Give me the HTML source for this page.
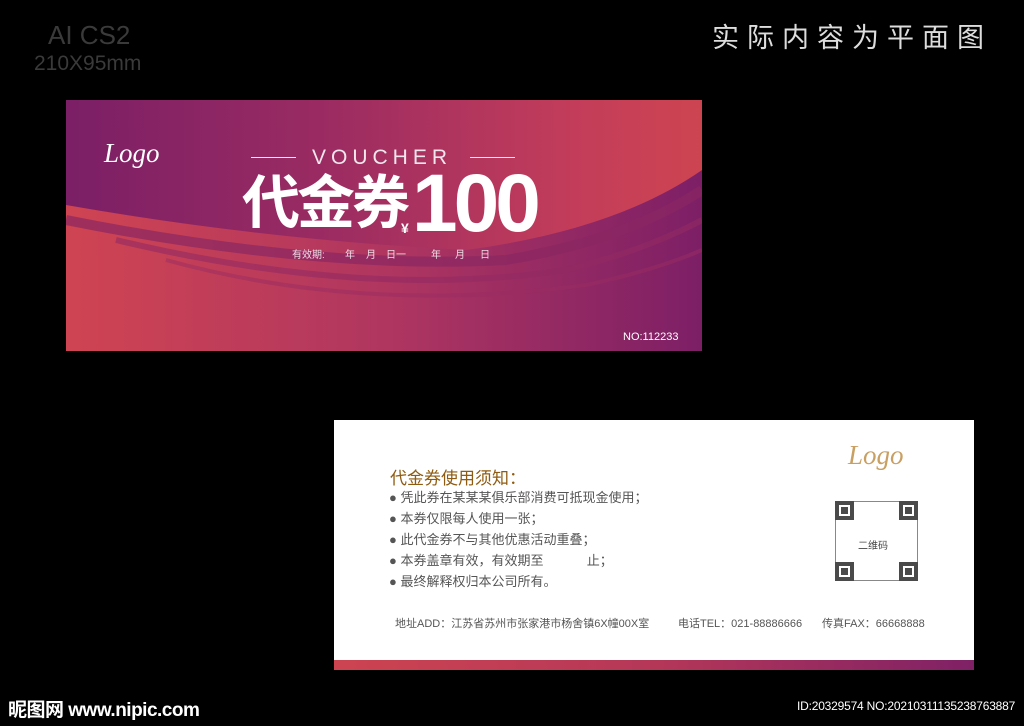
<!DOCTYPE html>
<html><head><meta charset="utf-8"><style>
body{margin:0;width:1024px;height:726px;background:#000;position:relative;overflow:hidden;font-family:"Liberation Sans","Noto Sans CJK SC",sans-serif}
.a{position:absolute;white-space:nowrap}
.d{position:absolute;top:146px;color:#eedde6;font-size:10px}
</style></head><body>
<div class="a" style="left:48px;top:20px;color:#3a3a3a;font-size:26px;line-height:30px">AI CS2</div>
<div class="a" style="left:34px;top:52px;color:#3a3a3a;font-size:21px;line-height:24px">210X95mm</div>
<div class="a" style="left:712px;top:22px;color:#ddd;font-size:27px;letter-spacing:8px;line-height:32px">实际内容为平面图</div>

<div class="a" style="left:66px;top:100px;width:636px;height:251px;overflow:hidden;background:linear-gradient(90deg,#7b1f66 0%,#9a2b62 40%,#c33d5a 80%,#cd4451 100%)">
<svg width="636" height="251" style="position:absolute;left:0;top:0">
<defs><linearGradient id="g" x1="0" x2="1"><stop offset="0" stop-color="#cf4452"/><stop offset=".5" stop-color="#b03660"/><stop offset="1" stop-color="#7d1f66"/></linearGradient></defs>
<path d="M0 105 Q200 140 400 150 Q550 130 636 70 L636 251 L0 251Z" fill="url(#g)"/>
<path d="M0 120 Q250 170 440 160 Q560 140 636 90" fill="none" stroke="#8a2663" stroke-width="10" opacity=".7"/>
<path d="M50 140 Q300 200 500 170 Q580 150 636 120" fill="none" stroke="#922a63" stroke-width="6" opacity=".6"/>
<path d="M100 160 Q300 215 520 185 Q590 170 636 150" fill="none" stroke="#9a2c62" stroke-width="4" opacity=".5"/>
</svg>
<div class="a" style="left:38px;top:38px;color:#fff;font-family:'Liberation Serif',serif;font-style:italic;font-size:27px">Logo</div>
<div class="a" style="left:185px;top:57px;width:45px;height:1px;background:#eee"></div>
<div class="a" style="left:404px;top:57px;width:45px;height:1px;background:#eee"></div>
<div class="a" style="left:246px;top:46px;color:#f0e6ee;font-size:21px;letter-spacing:5px">VOUCHER</div>
<div class="a" style="left:176px;top:68px;color:#fff;font-size:58px;font-weight:bold;line-height:72px;letter-spacing:-3px">代金券</div>
<div class="a" style="left:335px;top:120px;color:#fff;font-size:14px;font-weight:bold">¥</div>
<div class="a" style="left:346px;top:64px;color:#fff;font-size:82px;font-weight:bold;line-height:80px;letter-spacing:-4px">100</div>
<div class="d" style="left:226px">有效期:</div>
<div class="d" style="left:279px">年</div>
<div class="d" style="left:300px">月</div>
<div class="d" style="left:320px">日一</div>
<div class="d" style="left:365px">年</div>
<div class="d" style="left:389px">月</div>
<div class="d" style="left:414px">日</div>
<div class="a" style="left:557px;top:231px;color:#fff;font-size:11px">NO:112233</div>
</div>

<div class="a" style="left:334px;top:420px;width:640px;height:250px;background:#fff">
<div class="a" style="left:0;bottom:0;width:640px;height:10px;background:linear-gradient(90deg,#cd4451,#b53758 50%,#7f2166)"></div>
<div class="a" style="left:514px;top:20px;color:#c9a063;font-family:'Liberation Serif',serif;font-style:italic;font-size:27px">Logo</div>
<div class="a" style="left:56px;top:44px;color:#8f5b10;font-size:17px">代金券使用须知：</div>
<div class="a" style="left:55px;top:67px;color:#555;font-size:13px;line-height:21px;white-space:pre">● 凭此券在某某某俱乐部消费可抵现金使用；
● 本券仅限每人使用一张；
● 此代金券不与其他优惠活动重叠；
● 本券盖章有效，有效期至            止；
● 最终解释权归本公司所有。</div>
<div class="a" style="left:501px;top:81px;width:83px;height:80px;border:1px solid #888;box-sizing:border-box"></div>
<div class="a" style="left:501px;top:81px;width:19px;height:19px;background:#4a4a4a"></div>
<div class="a" style="left:505px;top:85px;width:11px;height:11px;background:#fff"></div>
<div class="a" style="left:507px;top:87px;width:7px;height:7px;background:#4a4a4a"></div>
<div class="a" style="left:565px;top:81px;width:19px;height:19px;background:#4a4a4a"></div>
<div class="a" style="left:569px;top:85px;width:11px;height:11px;background:#fff"></div>
<div class="a" style="left:571px;top:87px;width:7px;height:7px;background:#4a4a4a"></div>
<div class="a" style="left:501px;top:142px;width:19px;height:19px;background:#4a4a4a"></div>
<div class="a" style="left:505px;top:146px;width:11px;height:11px;background:#fff"></div>
<div class="a" style="left:507px;top:148px;width:7px;height:7px;background:#4a4a4a"></div>
<div class="a" style="left:565px;top:142px;width:19px;height:19px;background:#4a4a4a"></div>
<div class="a" style="left:569px;top:146px;width:11px;height:11px;background:#fff"></div>
<div class="a" style="left:571px;top:148px;width:7px;height:7px;background:#4a4a4a"></div>
<div class="a" style="left:524px;top:117px;color:#444;font-size:10px">二维码</div>
<div class="a" style="left:61px;top:195px;color:#555;font-size:11px">地址ADD：江苏省苏州市张家港市杨舍镇6X幢00X室</div>
<div class="a" style="left:344px;top:195px;color:#555;font-size:11px">电话TEL：021-88886666</div>
<div class="a" style="left:488px;top:195px;color:#555;font-size:11px">传真FAX：66668888</div>
</div>

<div class="a" style="left:8px;top:695px;color:#fff;font-size:19px;font-weight:bold;letter-spacing:-0.5px">昵图网 www.nipic.com</div>
<div class="a" style="left:797px;top:699px;color:#fff;font-size:12px;letter-spacing:-0.2px">ID:20329574 NO:20210311135238763887</div>
</body></html>
